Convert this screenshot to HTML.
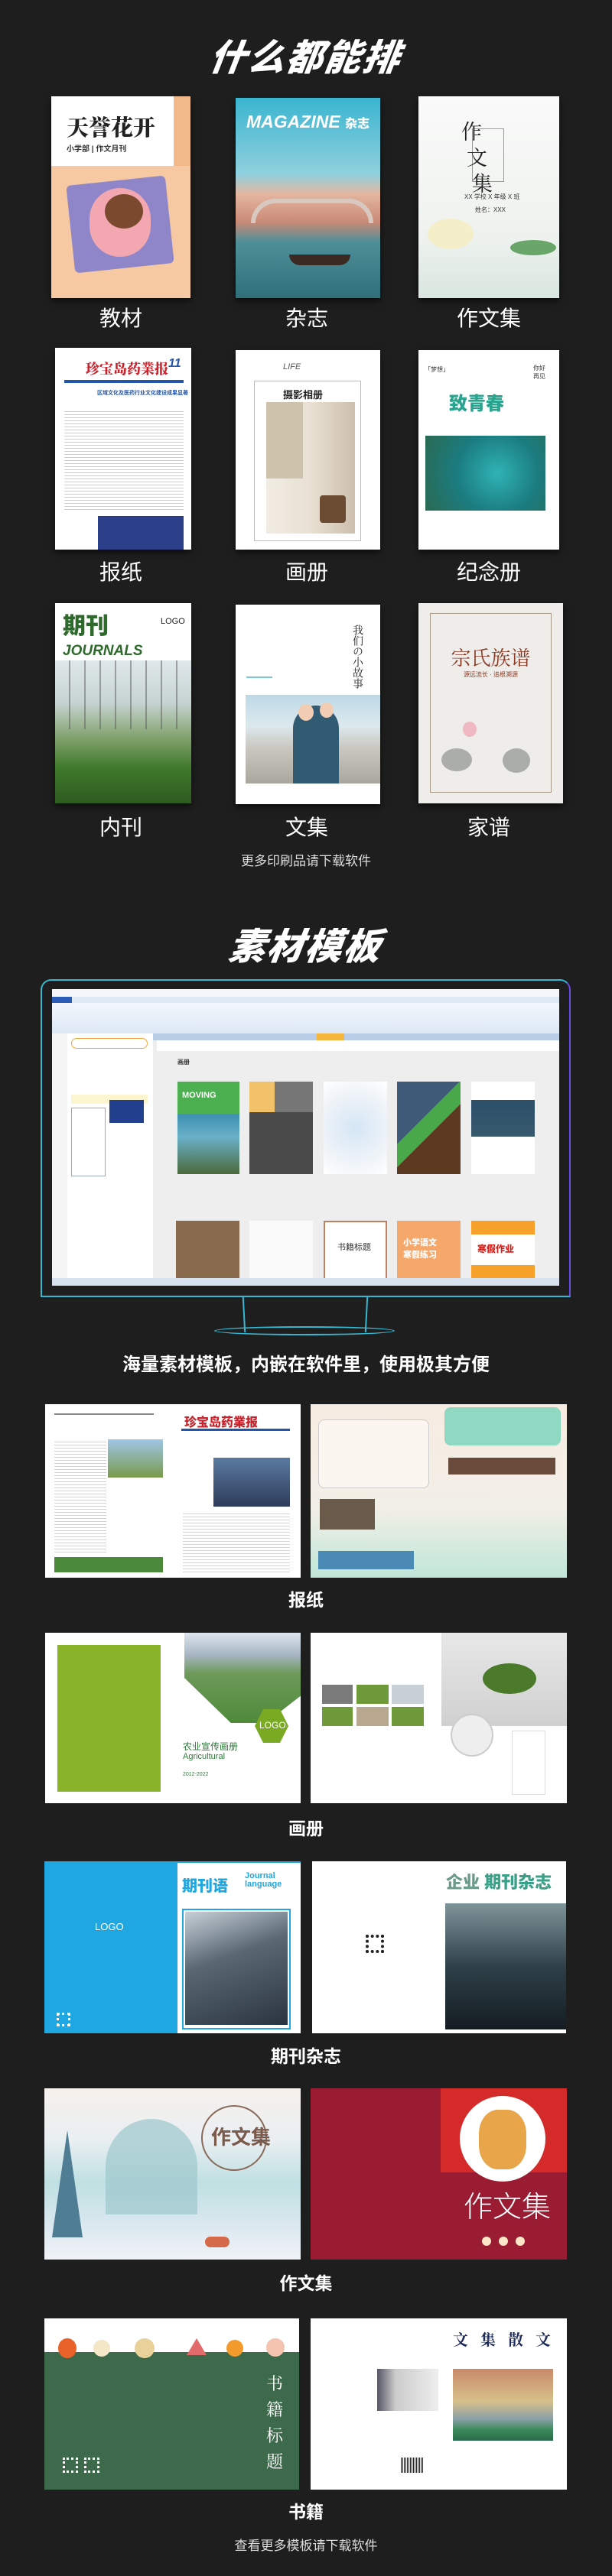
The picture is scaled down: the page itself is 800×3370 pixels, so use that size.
<!DOCTYPE html>
<html><head><meta charset="utf-8">
<style>
*{margin:0;padding:0;box-sizing:border-box}
body{width:800px;height:3370px;background:#1e1e1e;position:relative;overflow:hidden;font-family:"Liberation Sans","Noto Sans CJK SC",sans-serif;color:#fff}
.a{position:absolute}
.t{position:absolute;left:0;width:800px;text-align:center}
.h1{font-size:48px;font-weight:900;font-style:italic;letter-spacing:2px;transform:skewX(-8deg)}
.lb{font-size:28px;font-weight:400;line-height:34px}
.lb2{font-size:23px;font-weight:700}
.sm{font-size:17px;color:#ddd}
.sh{box-shadow:0 4px 8px rgba(0,0,0,.6);overflow:hidden}
</style></head><body>

<div class="t h1" style="top:36px">什么都能排</div>

<!-- Row 1 -->
<div class="a sh" style="left:67px;top:126px;width:182px;height:264px;background:#f6c9a2">
 <div class="a" style="left:0;top:0;width:182px;height:91px;background:#fff"></div>
 <div class="a" style="left:160px;top:0;width:22px;height:91px;background:#f2b98a"></div>
 <div class="a" style="left:20px;top:22px;font-size:29px;font-weight:900;color:#222;font-family:'Noto Serif CJK SC',serif;line-height:36px">天誉花开</div>
 <div class="a" style="left:20px;top:60px;font-size:10px;color:#333;font-weight:700">小学部 | 作文月刊</div>
 <div class="a" style="left:25px;top:110px;width:130px;height:115px;background:#8e86c9;border-radius:6px;transform:rotate(-6deg)"></div>
 <div class="a" style="left:50px;top:120px;width:80px;height:90px;background:#f3a7b0;border-radius:40px"></div>
 <div class="a" style="left:70px;top:128px;width:50px;height:45px;background:#7b4a2e;border-radius:50%"></div>
</div>
<div class="a sh" style="left:308px;top:128px;width:189px;height:262px;background:linear-gradient(#3ab5cf 0%,#8fd0de 38%,#e4b6a0 48%,#c98a76 62%,#4f8f98 72%,#2f6f7a 100%)">
 <div class="a" style="left:14px;top:18px;font-size:23px;font-weight:900;font-style:italic;color:#fff">MAGAZINE <span style="font-size:16px;font-style:normal">杂志</span></div>
 <div class="a" style="left:20px;top:132px;width:160px;height:32px;border-radius:70px 70px 0 0;border:6px solid #d8c8c0;border-bottom:none"></div>
 <div class="a" style="left:70px;top:205px;width:80px;height:14px;background:#3a2a22;border-radius:0 0 40px 40px"></div>
</div>
<div class="a sh" style="left:547px;top:126px;width:184px;height:264px;background:linear-gradient(#fafafa,#eef2ee 70%,#d9e6e0)">
 <div class="a" style="left:70px;top:42px;width:42px;height:70px;border:1px solid #999"></div>
 <div class="a" style="left:56px;top:28px;font-size:27px;color:#222;font-family:'Noto Serif CJK SC',serif;line-height:34px">作<br>&nbsp;文<br>&nbsp;&nbsp;集</div>
 <div class="a" style="left:60px;top:126px;font-size:8px;color:#333">XX 学校 X 年级 X 班</div>
 <div class="a" style="left:74px;top:143px;font-size:8px;color:#333">姓名：XXX</div>
 <div class="a" style="left:12px;top:160px;width:60px;height:40px;background:#f4efc8;border-radius:50%"></div>
 <div class="a" style="left:120px;top:188px;width:60px;height:20px;background:#6aa56a;border-radius:50%"></div>
</div>
<div class="t lb" style="top:400px;width:316px">教材</div>
<div class="t lb" style="top:400px;left:243px;width:316px">杂志</div>
<div class="t lb" style="top:400px;left:481px;width:316px">作文集</div>

<!-- Row 2 -->
<div class="a sh" style="left:72px;top:455px;width:178px;height:264px;background:#fff">
 <div class="a" style="left:40px;top:14px;font-size:18px;font-weight:900;color:#c8232c;font-family:'Noto Serif CJK SC',serif">珍宝岛药業报</div>
 <div class="a" style="left:148px;top:12px;font-size:16px;font-weight:700;color:#2455a8;font-style:italic">11</div>
 <div class="a" style="left:12px;top:42px;width:156px;height:4px;background:#2455a8"></div>
 <div class="a" style="left:55px;top:54px;font-size:7px;color:#2455a8;font-weight:700">区域文化及医药行业文化建设成果显著</div>
 <div class="a" style="left:12px;top:80px;width:156px;height:135px;background:repeating-linear-gradient(#fff 0 3px,#ccc 3px 4px)"></div>
 <div class="a" style="left:56px;top:220px;width:112px;height:44px;background:#2b3f8a"></div>
</div>
<div class="a sh" style="left:308px;top:458px;width:189px;height:261px;background:#fff">
 <div class="a" style="left:24px;top:40px;width:140px;height:210px;border:1px solid #bbb"></div>
 <div class="a" style="left:62px;top:48px;font-size:13px;font-weight:700;color:#222">摄影相册</div>
 <div class="a" style="left:62px;top:16px;font-size:11px;font-style:italic;color:#555">LIFE</div>
 <div class="a" style="left:40px;top:68px;width:116px;height:172px;background:linear-gradient(90deg,#f1ece4,#e8e0d2 50%,#cdbfae)"></div>
 <div class="a" style="left:40px;top:68px;width:48px;height:100px;background:#cfc3ae"></div>
 <div class="a" style="left:110px;top:190px;width:34px;height:36px;background:#6b4b32;border-radius:4px"></div>
</div>
<div class="a sh" style="left:547px;top:458px;width:184px;height:261px;background:#fff">
 <div class="a" style="left:40px;top:50px;font-size:24px;font-weight:900;color:#2aa38f">致青春</div>
 <div class="a" style="left:8px;top:20px;font-size:8px;color:#333">「梦想」</div>
 <div class="a" style="left:150px;top:18px;font-size:8px;color:#333">你好<br>再见</div>
 <div class="a" style="left:9px;top:112px;width:157px;height:98px;background:radial-gradient(circle at 60% 50%,#2fb3b5,#1b7c80 50%,#2a6a52)"></div>
</div>
<div class="t lb" style="top:732px;width:316px">报纸</div>
<div class="t lb" style="top:732px;left:243px;width:316px">画册</div>
<div class="t lb" style="top:732px;left:481px;width:316px">纪念册</div>

<!-- Row 3 -->
<div class="a sh" style="left:72px;top:789px;width:178px;height:262px;background:#fff">
 <div class="a" style="left:10px;top:14px;font-size:30px;font-weight:900;color:#2d6a2b;line-height:34px">期刊</div>
 <div class="a" style="left:138px;top:18px;font-size:11px;color:#222">LOGO</div>
 <div class="a" style="left:10px;top:52px;font-size:19px;font-weight:900;font-style:italic;color:#2d6a2b">JOURNALS</div>
 <div class="a" style="left:0;top:75px;width:178px;height:187px;background:linear-gradient(#dfe8ea 0%,#c6d3d0 30%,#7fa06a 55%,#3f7a2c 75%,#2e5a20)"></div>
 <div class="a" style="left:0;top:75px;width:178px;height:90px;background:repeating-linear-gradient(90deg,transparent 0 18px,rgba(90,90,90,.5) 18px 20px)"></div>
</div>
<div class="a sh" style="left:308px;top:791px;width:189px;height:261px;background:#fff">
 <div class="a" style="left:150px;top:26px;font-size:14px;color:#222;writing-mode:vertical-rl;font-family:'Noto Serif CJK SC',serif">我们の小故事</div>
 <div class="a" style="left:14px;top:94px;width:34px;height:2px;background:#7cc6d5"></div>
 <div class="a" style="left:13px;top:118px;width:176px;height:116px;background:linear-gradient(#bcd9e6 0%,#dce9ee 35%,#c9c7bf 60%,#a9a79d)"></div>
 <div class="a" style="left:75px;top:132px;width:60px;height:102px;background:#315a73;border-radius:30px 30px 0 0"></div>
 <div class="a" style="left:82px;top:130px;width:20px;height:22px;background:#f2cdb3;border-radius:50%"></div>
 <div class="a" style="left:110px;top:128px;width:18px;height:20px;background:#f2cdb3;border-radius:50%"></div>
</div>
<div class="a sh" style="left:547px;top:789px;width:189px;height:262px;background:#efedea">
 <div class="a" style="left:15px;top:13px;width:159px;height:235px;border:1px solid #a89a8a"></div>
 <div class="a" style="left:0;top:52px;width:189px;text-align:center;font-size:26px;color:#8a3a25;font-family:'Noto Serif CJK SC',serif">宗氏族谱</div>
 <div class="a" style="left:0;top:88px;width:189px;text-align:center;font-size:8px;color:#8a3a25">源远流长 · 追根溯源</div>
 <div class="a" style="left:30px;top:190px;width:40px;height:30px;background:#8f918f;border-radius:50%;opacity:.7"></div>
 <div class="a" style="left:110px;top:190px;width:36px;height:32px;background:#8f918f;border-radius:50%;opacity:.7"></div>
 <div class="a" style="left:58px;top:155px;width:18px;height:20px;background:#f0b8c0;border-radius:50%"></div>
</div>
<div class="t lb" style="top:1066px;width:316px">内刊</div>
<div class="t lb" style="top:1066px;left:243px;width:316px">文集</div>
<div class="t lb" style="top:1066px;left:481px;width:316px">家谱</div>

<div class="t sm" style="top:1112px">更多印刷品请下载软件</div>

<div class="t h1" style="top:1199px">素材模板</div>

<!-- Monitor -->
<div class="a" style="left:53px;top:1281px;width:693px;height:416px;border:2px solid;border-radius:14px 14px 0 0;border-color:#38b7d0 #6a4be0 #38b7d0 #38b7d0"></div>
<div class="a" style="left:318px;top:1697px;width:2px;height:46px;background:#38b7d0;transform:skewX(3deg)"></div>
<div class="a" style="left:478px;top:1697px;width:2px;height:46px;background:#38b7d0;transform:skewX(-3deg)"></div>
<div class="a" style="left:280px;top:1735px;width:236px;height:12px;border:2px solid #38b7d0;border-radius:50%"></div>

<div class="a" style="left:68px;top:1294px;width:663px;height:388px;background:#eeeeee;overflow:hidden">
 <div class="a" style="left:0;top:0;width:663px;height:10px;background:#f4f6fa"></div>
 <div class="a" style="left:0;top:10px;width:663px;height:8px;background:#dfe8f5"></div>
 <div class="a" style="left:0;top:10px;width:26px;height:8px;background:#2a5cb8"></div>
 <div class="a" style="left:0;top:18px;width:663px;height:40px;background:linear-gradient(#f3f7fc,#dde8f5)"></div>
 <div class="a" style="left:0;top:58px;width:663px;height:9px;background:#b9cde6"></div>
 <div class="a" style="left:346px;top:58px;width:36px;height:9px;background:#f6b53c"></div>
 <div class="a" style="left:0;top:58px;width:20px;height:330px;background:#f5f5f5"></div>
 <div class="a" style="left:20px;top:58px;width:112px;height:330px;background:#fff"></div>
 <div class="a" style="left:25px;top:64px;width:100px;height:14px;border:1.5px solid #f2a83a;border-radius:8px"></div>
 <div class="a" style="left:25px;top:138px;width:100px;height:12px;background:#fcf5d0"></div>
 <div class="a" style="left:25px;top:155px;width:45px;height:90px;border:1px solid #9ab;background:#fff"></div>
 <div class="a" style="left:75px;top:145px;width:45px;height:30px;background:#23408e"></div>
 <div class="a" style="left:137px;top:67px;width:526px;height:14px;background:#fff"></div>
 <div class="a" style="left:164px;top:90px;font-size:8px;color:#333;font-weight:700">画册</div>
 <div class="a" style="left:164px;top:121px;width:81px;height:121px;background:linear-gradient(#4caf50 0 35%,#3a8fb0 35%,#6ab0c8 60%,#4a6a3a 100%)"><div class="a" style="left:6px;top:12px;font-size:11px;font-weight:900;color:#fff">MOVING</div></div>
 <div class="a" style="left:258px;top:121px;width:83px;height:121px;background:linear-gradient(90deg,#f1c26a 0 40%,#777 40%);"><div class="a" style="left:0;top:40px;width:83px;height:81px;background:#4a4a4a"></div></div>
 <div class="a" style="left:355px;top:121px;width:83px;height:121px;background:radial-gradient(circle,#d5e6f5,#eef3f8 60%,#fff)"></div>
 <div class="a" style="left:451px;top:121px;width:83px;height:121px;background:linear-gradient(135deg,#3f5b7a 0 40%,#49a84a 40% 55%,#5c3a22 55%)"></div>
 <div class="a" style="left:548px;top:121px;width:83px;height:121px;background:#fff"><div class="a" style="left:0;top:24px;width:83px;height:48px;background:linear-gradient(#2c4f6a,#385a6e)"></div></div>
 <div class="a" style="left:162px;top:303px;width:83px;height:85px;background:#8a6a4c"></div>
 <div class="a" style="left:258px;top:303px;width:83px;height:85px;background:#fafafa"></div>
 <div class="a" style="left:355px;top:303px;width:83px;height:85px;background:#fff;border:2px solid #c08060"><div class="a" style="left:16px;top:24px;font-size:11px;color:#333">书籍标题</div></div>
 <div class="a" style="left:451px;top:303px;width:83px;height:85px;background:#f6a86a"><div class="a" style="left:8px;top:20px;font-size:11px;font-weight:900;color:#fff">小学语文<br>寒假练习</div></div>
 <div class="a" style="left:548px;top:303px;width:83px;height:85px;background:#f7a12a"><div class="a" style="left:0;top:18px;width:83px;height:40px;background:#fff"></div><div class="a" style="left:8px;top:28px;font-size:12px;font-weight:900;color:#d3251f">寒假作业</div></div>
 <div class="a" style="left:0;top:378px;width:663px;height:10px;background:#d8e2ee"></div>
</div>

<div class="t" style="top:1765px;font-size:24px;font-weight:700">海量素材模板，内嵌在软件里，使用极其方便</div>

<!-- 报纸 spread -->
<div class="a" style="left:59px;top:1837px;width:334px;height:227px;background:#fff">
 <div class="a" style="left:12px;top:12px;width:130px;height:2px;background:#888"></div>
 <div class="a" style="left:182px;top:10px;font-size:16px;font-weight:900;color:#c8232c">珍宝岛药業报</div>
 <div class="a" style="left:178px;top:32px;width:142px;height:3px;background:#2455a8"></div>
 <div class="a" style="left:82px;top:46px;width:72px;height:50px;background:linear-gradient(#9ec6e6,#7a9a4a)"></div>
 <div class="a" style="left:220px;top:70px;width:100px;height:64px;background:linear-gradient(#5a7aa0,#2e3c5a)"></div>
 <div class="a" style="left:12px;top:46px;width:68px;height:150px;background:repeating-linear-gradient(#fff 0 3px,#d4d4d4 3px 4px)"></div>
 <div class="a" style="left:180px;top:140px;width:140px;height:80px;background:repeating-linear-gradient(#fff 0 3px,#d4d4d4 3px 4px)"></div>
 <div class="a" style="left:12px;top:200px;width:142px;height:20px;background:#4b8a3a"></div>
</div>
<div class="a" style="left:406px;top:1837px;width:335px;height:227px;background:linear-gradient(#f7ece2,#f2efe7 60%,#bfe6d7)">
 <div class="a" style="left:175px;top:4px;width:152px;height:50px;background:#8fd8c2;border-radius:8px"></div>
 <div class="a" style="left:10px;top:20px;width:145px;height:90px;border:1px solid #ccc;border-radius:8px;background:#fbf6ef"></div>
 <div class="a" style="left:12px;top:124px;width:72px;height:40px;background:#6a5a4a"></div>
 <div class="a" style="left:180px;top:70px;width:140px;height:22px;background:#6a4a3a"></div>
 <div class="a" style="left:10px;top:192px;width:125px;height:24px;background:#4a8ab5"></div>
</div>
<div class="t lb2" style="top:2074px">报纸</div>

<!-- 画册 spread -->
<div class="a" style="left:59px;top:2136px;width:334px;height:223px;background:#fff">
 <div class="a" style="left:16px;top:16px;width:135px;height:192px;background:#8ab52a"></div>
 <div class="a" style="left:182px;top:0;width:152px;height:118px;background:linear-gradient(#dfe6ee 0,#a6b5c2 25%,#6e9a5a 45%,#4e8a3a 100%);clip-path:polygon(0 0,100% 0,100% 70%,70% 100%,40% 100%,0 50%)"></div>
 <div class="a" style="left:274px;top:100px;width:44px;height:44px;background:#7aaa22;clip-path:polygon(25% 0,75% 0,100% 50%,75% 100%,25% 100%,0 50%)"></div>
 <div class="a" style="left:280px;top:114px;font-size:12px;color:#fff">LOGO</div>
 <div class="a" style="left:180px;top:140px;font-size:12px;color:#2d7a3a">农业宣传画册</div>
 <div class="a" style="left:180px;top:156px;font-size:11px;color:#2d7a3a">Agricultural</div>
 <div class="a" style="left:180px;top:182px;font-size:7px;color:#2d7a3a">2012-2022</div>
</div>
<div class="a" style="left:406px;top:2136px;width:335px;height:223px;background:#fff">
 <div class="a" style="left:171px;top:0;width:164px;height:122px;background:linear-gradient(#e8e8e8,#d0d0d0)"></div>
 <div class="a" style="left:225px;top:40px;width:70px;height:40px;background:#4a7a2a;border-radius:50%"></div>
 <div class="a" style="left:15px;top:68px;width:40px;height:25px;background:#7a7a7a"></div>
 <div class="a" style="left:60px;top:68px;width:42px;height:25px;background:#6e9a3a"></div>
 <div class="a" style="left:106px;top:68px;width:42px;height:25px;background:#c8d0d8"></div>
 <div class="a" style="left:15px;top:97px;width:40px;height:25px;background:#6e9a3a"></div>
 <div class="a" style="left:60px;top:97px;width:42px;height:25px;background:#b9a890"></div>
 <div class="a" style="left:106px;top:97px;width:42px;height:25px;background:#6e9a3a"></div>
 <div class="a" style="left:183px;top:106px;width:56px;height:56px;border-radius:50%;border:2px solid #ccc;background:#eee"></div>
 <div class="a" style="left:263px;top:128px;width:44px;height:84px;border:1px solid #ddd;background:#fff"></div>
</div>
<div class="t lb2" style="top:2373px">画册</div>

<!-- 期刊 spread -->
<div class="a" style="left:58px;top:2435px;width:335px;height:225px;background:#1ea7e1">
 <div class="a" style="left:174px;top:2px;width:161px;height:223px;background:#fff"></div>
 <div class="a" style="left:180px;top:16px;font-size:20px;font-weight:900;color:#1ea7e1">期刊语</div>
 <div class="a" style="left:262px;top:14px;font-size:11px;color:#1ea7e1;line-height:11px;font-weight:700">Journal<br>language</div>
 <div class="a" style="left:180px;top:62px;width:142px;height:158px;border:2px solid #1ea7e1"></div>
 <div class="a" style="left:184px;top:66px;width:134px;height:148px;background:linear-gradient(160deg,#c7d0d8,#5a6874 40%,#2a3440)"></div>
 <div class="a" style="left:66px;top:78px;font-size:13px;color:#fff">LOGO</div>
 <div class="a" style="left:16px;top:198px;width:18px;height:18px;border:3px dotted #fff"></div>
</div>
<div class="a" style="left:408px;top:2435px;width:332px;height:225px;background:#fff">
 <div class="a" style="left:175px;top:10px;font-size:22px;font-weight:900;color:#6a9a8a">企业 <span style="color:#3aa088">期刊杂志</span></div>
 <div class="a" style="left:174px;top:55px;width:158px;height:165px;background:linear-gradient(#7f959a,#2f4048 50%,#141c22)"></div>
 <div class="a" style="left:70px;top:96px;width:24px;height:24px;border:4px dotted #222"></div>
</div>
<div class="t lb2" style="top:2671px">期刊杂志</div>

<!-- 作文集 spread -->
<div class="a" style="left:58px;top:2732px;width:335px;height:224px;background:linear-gradient(#f6f0ec,#eaeff2 30%,#bfe0e2 55%,#dbe8f0 80%,#f0f3f6)">
 <div class="a" style="left:80px;top:40px;width:120px;height:125px;background:#9cc8cc;border-radius:60% 60% 0 0;opacity:.7"></div>
 <div class="a" style="left:10px;top:55px;width:40px;height:140px;background:#4f7d94;clip-path:polygon(50% 0,100% 100%,0 100%)"></div>
 <div class="a" style="left:205px;top:22px;width:86px;height:86px;border:2px solid #8a6a5a;border-radius:50%"></div>
 <div class="a" style="left:218px;top:44px;font-size:26px;font-weight:700;color:#7a5a4a">作文集</div>
 <div class="a" style="left:210px;top:194px;width:32px;height:14px;background:#d46a4a;border-radius:8px"></div>
</div>
<div class="a" style="left:406px;top:2732px;width:335px;height:224px;background:#9a1c33">
 <div class="a" style="left:170px;top:0;width:165px;height:110px;background:#d42a2a"></div>
 <div class="a" style="left:195px;top:10px;width:112px;height:112px;background:#fff;border-radius:50%"></div>
 <div class="a" style="left:220px;top:28px;width:62px;height:78px;background:#e9a54a;border-radius:40%"></div>
 <div class="a" style="left:200px;top:124px;font-size:38px;color:#fff;font-weight:300">作文集</div>
 <div class="a" style="left:224px;top:194px;width:12px;height:12px;background:#fbe6c8;border-radius:50%"></div>
 <div class="a" style="left:246px;top:194px;width:12px;height:12px;background:#fbe6c8;border-radius:50%"></div>
 <div class="a" style="left:268px;top:194px;width:12px;height:12px;background:#fbe6c8;border-radius:50%"></div>
</div>
<div class="t lb2" style="top:2968px">作文集</div>

<!-- 书籍 spread -->
<div class="a" style="left:58px;top:3033px;width:333px;height:224px;background:#3d6a4a">
 <div class="a" style="left:0;top:0;width:333px;height:44px;background:#fff"></div>
 <div class="a" style="left:18px;top:26px;width:24px;height:26px;background:#e8622a;border-radius:50%"></div>
 <div class="a" style="left:64px;top:28px;width:22px;height:22px;background:#f3e7c8;border-radius:50%"></div>
 <div class="a" style="left:118px;top:26px;width:26px;height:26px;background:#e8d29a;border-radius:50%"></div>
 <div class="a" style="left:186px;top:26px;width:26px;height:22px;background:#e26a6a;clip-path:polygon(50% 0,100% 100%,0 100%)"></div>
 <div class="a" style="left:238px;top:28px;width:22px;height:22px;background:#f29a2a;border-radius:50%"></div>
 <div class="a" style="left:290px;top:26px;width:24px;height:24px;background:#f4c4b0;border-radius:50%"></div>
 <div class="a" style="left:290px;top:68px;font-size:22px;color:#fff;line-height:34px;font-family:'Noto Serif CJK SC',serif">书<br>籍<br>标<br>题</div>
 <div class="a" style="left:24px;top:182px;width:20px;height:20px;border:3px dotted #fff"></div>
 <div class="a" style="left:52px;top:182px;width:20px;height:20px;border:3px dotted #fff"></div>
</div>
<div class="a" style="left:406px;top:3033px;width:335px;height:224px;background:#fff">
 <div class="a" style="left:186px;top:12px;font-size:20px;font-weight:700;color:#1c2a5a;letter-spacing:16px;font-family:'Noto Serif CJK SC',serif">文集散文</div>
 <div class="a" style="left:87px;top:66px;width:80px;height:55px;background:linear-gradient(90deg,#556 0,#ccc 30%,#eee)"></div>
 <div class="a" style="left:186px;top:66px;width:131px;height:94px;background:linear-gradient(#c98a6a 0,#d6c08a 45%,#8aa0a8 70%,#3a8a5a 85%,#2a6a4a)"></div>
 <div class="a" style="left:118px;top:182px;width:30px;height:20px;background:repeating-linear-gradient(90deg,#222 0 1px,#fff 1px 2px)"></div>
</div>
<div class="t lb2" style="top:3267px">书籍</div>

<div class="t sm" style="top:3316px">查看更多模板请下载软件</div>
</body></html>
